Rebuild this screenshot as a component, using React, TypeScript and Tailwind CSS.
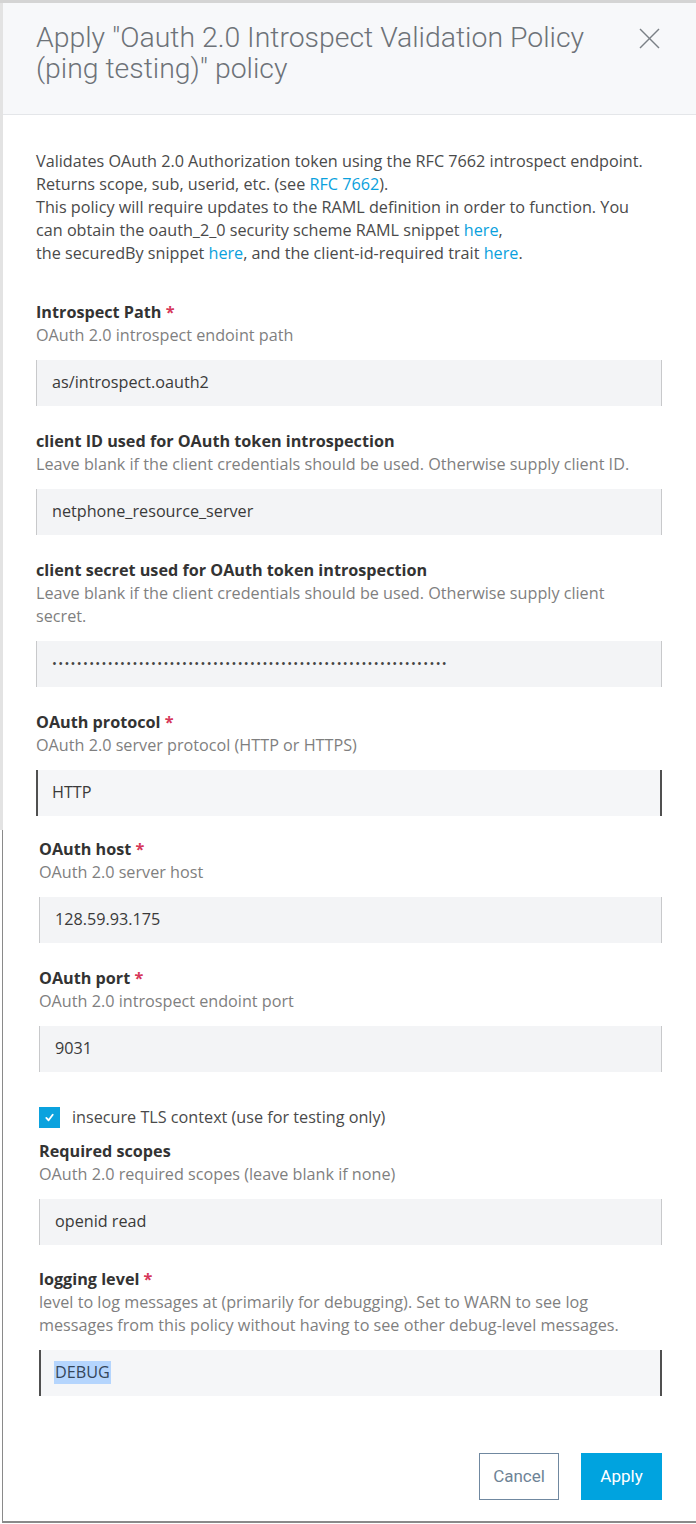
import React from "react";

function Req() {
  return <span className="text-[#d6375a]"> *</span>;
}

function Field({
  label,
  required,
  help,
  value,
  focused,
  highlight,
  className = "",
}: {
  label: string;
  required?: boolean;
  help: React.ReactNode;
  value: React.ReactNode;
  focused?: boolean;
  highlight?: boolean;
  className?: string;
}) {
  return (
    <div className={className}>
      <div className="font-bold text-[#333333]">
        {label}
        {required && <Req />}
      </div>
      <div className="text-[#7f7f7f]">{help}</div>
      <div
        className={
          focused
            ? "mt-[12.5px] h-[46px] bg-[#f5f6f8] border-x-2 border-[#505050] flex items-center px-[14px] text-[#3a3a3a]"
            : "mt-[12.5px] h-[46px] bg-[#f3f4f6] border-x border-[#c8c9cb] flex items-center px-[15px] text-[#3a3a3a]"
        }
      >
        {highlight ? (
          <span className="bg-[#b5d5fd] text-[#34465a] px-[1px] -ml-[1px]">{value}</span>
        ) : (
          value
        )}
      </div>
    </div>
  );
}

export default function App() {
  const dots = "•".repeat(64);
  return (
    <div className="w-[696px] min-h-[1524px] bg-white border-t-[3px] border-[#d4d4d4] font-['Open_Sans',sans-serif] text-[16.2px] leading-[23px] text-[#4a4a4a]">
      <div className="border-l-[3px] border-[#e3e3e3]">
        <header className="flex items-start justify-between bg-[#f7f8fa] border-b border-[#e4e6e9] pl-[33px] pr-[36px] pt-[19px] pb-[30px]">
          <h1 className="font-['Roboto',sans-serif] font-light text-[28.4px] leading-[31px] text-[#6d7278]">
            Apply "Oauth 2.0 Introspect Validation Policy
            <br />
            (ping testing)" policy
          </h1>
          <button className="mt-[6px] w-[21px] h-[21px] text-[#7b8086]" aria-label="Close">
            <svg viewBox="0 0 21 21" width="21" height="21" fill="none" stroke="currentColor" strokeWidth="1.4">
              <line x1="1" y1="1" x2="20" y2="20" />
              <line x1="20" y1="1" x2="1" y2="20" />
            </svg>
          </button>
        </header>

        <div className="pl-[33px] pr-[34px] pt-[35px] pb-[14px]">
          <p>
            Validates OAuth 2.0 Authorization token using the RFC 7662 introspect endpoint.
            <br />
            Returns scope, sub, userid, etc. (see <a className="text-[#0aa1dd]">RFC 7662</a>).
            <br />
            This policy will require updates to the RAML definition in order to function. You
            <br />
            can obtain the oauth_2_0 security scheme RAML snippet <a className="text-[#0aa1dd]">here</a>,
            <br />
            the securedBy snippet <a className="text-[#0aa1dd]">here</a>, and the client-id-required trait{" "}
            <a className="text-[#0aa1dd]">here</a>.
          </p>

          <Field
            className="mt-[36px]"
            label="Introspect Path"
            required
            help="OAuth 2.0 introspect endoint path"
            value="as/introspect.oauth2"
          />
          <Field
            className="mt-[24.5px]"
            label="client ID used for OAuth token introspection"
            help="Leave blank if the client credentials should be used. Otherwise supply client ID."
            value="netphone_resource_server"
          />
          <Field
            className="mt-[24.5px]"
            label="client secret used for OAuth token introspection"
            help={
              <>
                Leave blank if the client credentials should be used. Otherwise supply client
                <br />
                secret.
              </>
            }
            value={<span className="text-[13px] tracking-[1.3px] text-[#444]">{dots}</span>}
          />
          <Field
            className="mt-[24.5px]"
            label="OAuth protocol"
            required
            help="OAuth 2.0 server protocol (HTTP or HTTPS)"
            value="HTTP"
            focused
          />
        </div>
      </div>

      <div className="ml-[2px] border-l border-b-2 border-[#8a8a8a] pl-[36px] pr-[34px] pt-[8.5px] pb-[21px]">
        <Field label="OAuth host" required help="OAuth 2.0 server host" value="128.59.93.175" />
        <Field
          className="mt-[24.5px]"
          label="OAuth port"
          required
          help="OAuth 2.0 introspect endoint port"
          value="9031"
        />

        <div className="mt-[34.5px] h-[23px] flex items-center gap-[12px]">
          <span className="w-[21px] h-[21px] bg-[#0ba2de] flex items-center justify-center">
            <svg viewBox="0 0 12 12" width="11" height="11" fill="none" stroke="white" strokeWidth="2" strokeLinecap="round" strokeLinejoin="round">
              <polyline points="2.5,6.5 5,9 9.5,3" />
            </svg>
          </span>
          <span>insecure TLS context (use for testing only)</span>
        </div>

        <Field
          className="mt-[11px]"
          label="Required scopes"
          help="OAuth 2.0 required scopes (leave blank if none)"
          value="openid read"
        />
        <Field
          className="mt-[23.5px]"
          label="logging level"
          required
          help={
            <>
              level to log messages at (primarily for debugging). Set to WARN to see log
              <br />
              messages from this policy without having to see other debug-level messages.
            </>
          }
          value="DEBUG"
          focused
          highlight
        />

        <div className="mt-[57.5px] flex justify-end gap-[22px]">
          <button className="w-[80px] h-[47px] border border-[#7088a0] text-[#6e8396] font-['Roboto',sans-serif] text-[17px]">
            Cancel
          </button>
          <button className="w-[81px] h-[47px] bg-[#00a3df] text-white font-['Roboto',sans-serif] text-[17px]">
            Apply
          </button>
        </div>
      </div>
    </div>
  );
}
